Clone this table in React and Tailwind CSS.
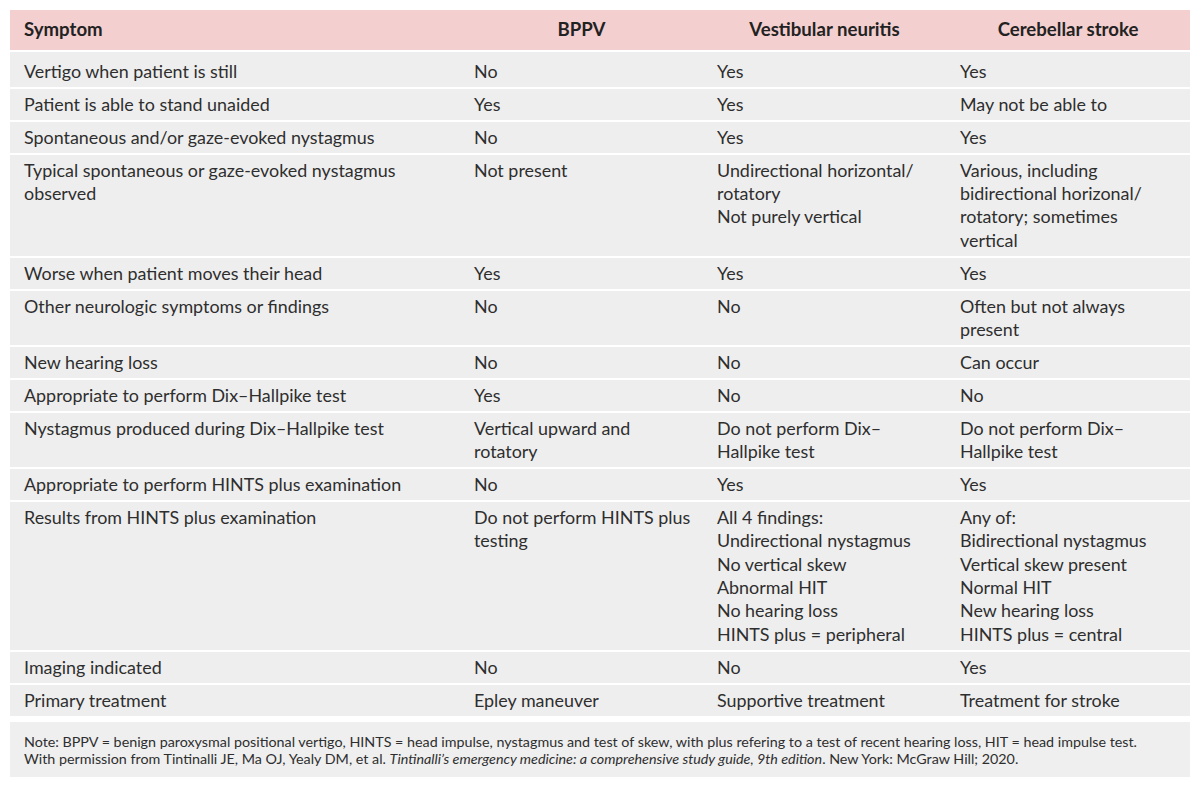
const rows = [
  ["Vertigo when patient is still", "No", "Yes", "Yes"],
  ["Patient is able to stand unaided", "Yes", "Yes", "May not be able to"],
  ["Spontaneous and/or gaze-evoked nystagmus", "No", "Yes", "Yes"],
  [
    ["Typical spontaneous or gaze-evoked nystagmus", "observed"],
    "Not present",
    ["Undirectional horizontal/", "rotatory", "Not purely vertical"],
    ["Various, including", "bidirectional horizonal/", "rotatory; sometimes", "vertical"],
  ],
  ["Worse when patient moves their head", "Yes", "Yes", "Yes"],
  ["Other neurologic symptoms or findings", "No", "No", ["Often but not always", "present"]],
  ["New hearing loss", "No", "No", "Can occur"],
  ["Appropriate to perform Dix\u2013Hallpike test", "Yes", "No", "No"],
  [
    "Nystagmus produced during Dix\u2013Hallpike test",
    ["Vertical upward and", "rotatory"],
    ["Do not perform Dix\u2013", "Hallpike test"],
    ["Do not perform Dix\u2013", "Hallpike test"],
  ],
  ["Appropriate to perform HINTS plus examination", "No", "Yes", "Yes"],
  [
    "Results from HINTS plus examination",
    ["Do not perform HINTS plus", "testing"],
    [
      "All 4 findings:",
      "Undirectional nystagmus",
      "No vertical skew",
      "Abnormal HIT",
      "No hearing loss",
      "HINTS plus = peripheral",
    ],
    [
      "Any of:",
      "Bidirectional nystagmus",
      "Vertical skew present",
      "Normal HIT",
      "New hearing loss",
      "HINTS plus = central",
    ],
  ],
  ["Imaging indicated", "No", "No", "Yes"],
  ["Primary treatment", "Epley maneuver", "Supportive treatment", "Treatment for stroke"],
];

function Cell({ value }) {
  const lines = Array.isArray(value) ? value : [value];
  return (
    <div className="whitespace-nowrap pl-[14px]">
      {lines.map((l, i) => (
        <div key={i}>{l}</div>
      ))}
    </div>
  );
}

export default function App() {
  return (
    <div
      className="h-[788px] w-[1200px] bg-white px-[10px] pt-[10px] text-[#2e2e2e]"
      style={{ fontFamily: "Lato, 'Noto Sans', sans-serif" }}
    >
      <div className="flex flex-col gap-[2px]">
        <div className="grid h-[40px] grid-cols-[450px_243px_243px_244px] items-center bg-[#f4cfcf] text-[18.6px] font-bold text-[#222]">
          <div className="pl-[14px]">Symptom</div>
          <div className="text-center">BPPV</div>
          <div className="text-center">Vestibular neuritis</div>
          <div className="text-center">Cerebellar stroke</div>
        </div>
        {rows.map((r, i) => (
          <div
            key={i}
            className={
              i === 0
                ? "grid grid-cols-[450px_243px_243px_244px] bg-[#eeeeee] pb-[3.85px] pt-[7.85px] text-[17.9px] leading-[23.3px]"
                : "grid grid-cols-[450px_243px_243px_244px] bg-[#eeeeee] py-[3.85px] text-[17.9px] leading-[23.3px]"
            }
          >
            {r.map((c, j) => (
              <Cell key={j} value={c} />
            ))}
          </div>
        ))}
      </div>
      <div className="mt-[6px] bg-[#efefef] px-[14px] pb-[10px] pt-[11px] text-[14.3px] leading-[17px]">
        <div>
          Note: BPPV = benign paroxysmal positional vertigo, HINTS = head impulse, nystagmus and test of skew, with
          plus refering to a test of recent hearing loss, HIT = head impulse test.
        </div>
        <div>
          With permission from Tintinalli JE, Ma OJ, Yealy DM, et al.{" "}
          <i>Tintinalli’s emergency medicine: a comprehensive study guide, 9th edition</i>. New York: McGraw Hill;
          2020.
        </div>
      </div>
    </div>
  );
}
